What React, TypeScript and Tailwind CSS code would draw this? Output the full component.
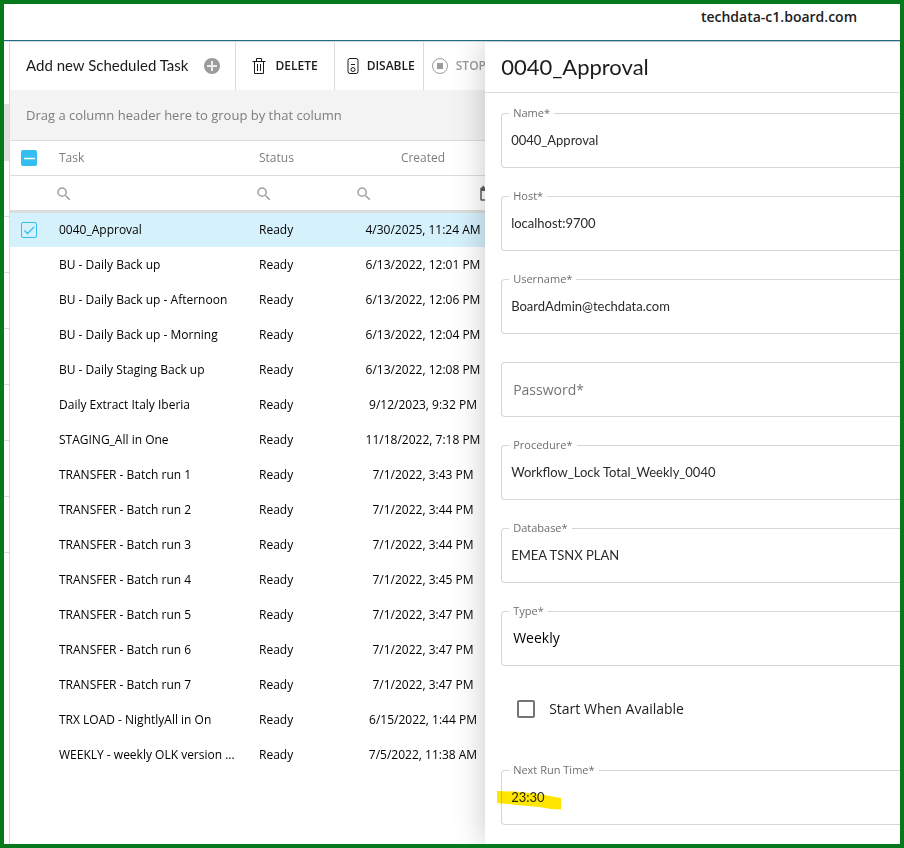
import { useState } from 'react';
import type { ReactNode } from 'react';

const TASKS = [
  { name: '0040_Approval', created: '4/30/2025, 11:24 AM' },
  { name: 'BU - Daily Back up', created: '6/13/2022, 12:01 PM' },
  { name: 'BU - Daily Back up - Afternoon', created: '6/13/2022, 12:06 PM' },
  { name: 'BU - Daily Back up - Morning', created: '6/13/2022, 12:04 PM' },
  { name: 'BU - Daily Staging Back up', created: '6/13/2022, 12:08 PM' },
  { name: 'Daily Extract Italy Iberia', created: '9/12/2023, 9:32 PM' },
  { name: 'STAGING_All in One', created: '11/18/2022, 7:18 PM' },
  { name: 'TRANSFER - Batch run 1', created: '7/1/2022, 3:43 PM' },
  { name: 'TRANSFER - Batch run 2', created: '7/1/2022, 3:44 PM' },
  { name: 'TRANSFER - Batch run 3', created: '7/1/2022, 3:44 PM' },
  { name: 'TRANSFER - Batch run 4', created: '7/1/2022, 3:45 PM' },
  { name: 'TRANSFER - Batch run 5', created: '7/1/2022, 3:47 PM' },
  { name: 'TRANSFER - Batch run 6', created: '7/1/2022, 3:47 PM' },
  { name: 'TRANSFER - Batch run 7', created: '7/1/2022, 3:47 PM' },
  { name: 'TRX LOAD - NightlyAll in On', created: '6/15/2022, 1:44 PM' },
  { name: 'WEEKLY - weekly OLK version ...', created: '7/5/2022, 11:38 AM' },
];

const SearchIcon = () => (
  <svg width="18" height="18" viewBox="0 0 24 24" fill="#a3a3a3" className="shrink-0">
    <path d="M15.5 14h-.79l-.28-.27A6.47 6.47 0 0 0 16 9.5 6.5 6.5 0 1 0 9.5 16c1.61 0 3.09-.59 4.23-1.57l.27.28v.79l5 4.99L20.49 19l-4.99-5zm-6 0C7.01 14 5 11.99 5 9.5S7.01 5 9.5 5 14 7.01 14 9.5 11.99 14 9.5 14z" />
  </svg>
);

const PlusIcon = () => (
  <svg width="16" height="16" viewBox="0 0 16 16">
    <circle cx="8" cy="8" r="8" fill="#9b9b9b" />
    <path d="M8 3v10M3 8h10" stroke="#ececec" strokeWidth="2" />
  </svg>
);

const TrashIcon = () => (
  <svg width="14" height="16" viewBox="0 0 14 16" fill="none" stroke="#1c1c1c">
    <path d="M.5 3.5h13M4.5 3V.5h5V3M2.5 3.5v12h9v-12M5.5 6v7M8.5 6v7" />
  </svg>
);

const DisableIcon = () => (
  <svg width="12" height="16" viewBox="0 0 12 16" fill="none" stroke="#1c1c1c">
    <rect x="1" y=".5" width="10" height="15" rx="2" />
    <path d="M4 6.5h4" />
    <circle cx="6" cy="11.5" r="2" />
  </svg>
);

const StopIcon = () => (
  <svg width="16" height="16" viewBox="0 0 16 16">
    <circle cx="8" cy="8" r="7.5" fill="none" stroke="#9b9b9b" />
    <rect x="5" y="5" width="6" height="6" fill="#9b9b9b" />
  </svg>
);

function Filter({ label }: { label: string }) {
  return (
    <label className="flex items-center gap-1">
      <SearchIcon />
      <input aria-label={label} className="w-full min-w-0 bg-transparent outline-none" />
    </label>
  );
}

function Field({ id, label, children }: { id: string; label: string; children: ReactNode }) {
  return (
    <fieldset className="h-[63px] rounded-l border border-r-0 border-[#d6d6d6] pl-[7px]">
      <legend className="px-1 text-[11px] leading-4 text-[#6e6e6e]">
        <label htmlFor={id}>{label}*</label>
      </legend>
      {children}
    </fieldset>
  );
}

function TextField({ id, label, value }: { id: string; label: string; value: string }) {
  return (
    <Field id={id} label={label}>
      <input
        id={id}
        defaultValue={value}
        className="block h-[38px] w-full pl-0.5 font-['Lato','Open_Sans',sans-serif] text-[13px] text-[#2b2b2b] outline-none"
      />
    </Field>
  );
}

export default function App() {
  const [selected, setSelected] = useState('0040_Approval');

  return (
    <div className="flex min-h-screen flex-col overflow-hidden border-4 border-[#067a1a] bg-white font-['Open_Sans','Noto_Sans',sans-serif] text-[#1c1c1c]">
      <header className="relative z-10 flex h-[37px] shrink-0 justify-end border-b border-[#1d6a88] bg-white pt-px pr-[43px]">
        <span className="text-sm leading-6 font-semibold">techdata-c1.board.com</span>
      </header>

      <div className="flex flex-1 border-t border-[#dcdcdc]">
        {/* Collapsed navigation, only its edge shows */}
        <nav aria-label="Sections" className="flex w-[5px] shrink-0 flex-col pt-[62px]">
          <span className="h-[57px] bg-[#e0e0e0]" />
          {[0, 1, 2, 3, 4, 5, 6].map((i) => (
            <span key={i} className="h-14 border-b border-[#dcdcdc]" />
          ))}
        </nav>

        <main className="min-w-0 flex-1 overflow-hidden border-l border-[#dcdcdc]">
          <div className="flex h-12 w-max divide-x divide-[#dcdcdc] text-xs font-semibold">
            <button className="flex items-center gap-4 px-4 pr-[15px] font-['Lato','Open_Sans',sans-serif] text-[15px] font-normal">
              Add new Scheduled Task
              <PlusIcon />
            </button>
            <button className="flex items-center gap-[9px] px-4">
              <TrashIcon />
              DELETE
            </button>
            <button className="flex items-center gap-2 pr-2 pl-3">
              <DisableIcon />
              DISABLE
            </button>
            <button disabled className="flex items-center gap-2 px-2 text-[#9b9b9b]">
              <StopIcon />
              STOP
            </button>
          </div>

          <div className="flex h-[51px] items-center border-b border-[#dcdcdc] bg-[#f3f3f3] px-4 pt-0.5 text-[13px] text-[#7d7d7d]">
            Drag a column header here to group by that column
          </div>

          <table className="w-[486px] table-fixed text-xs text-black">
            <colgroup>
              <col className="w-10" />
              <col className="w-[200px]" />
              <col className="w-[100px]" />
              <col />
            </colgroup>
            <thead>
              <tr className="h-[34px] border-b border-[#dcdcdc] text-left text-[#7d7d7d]">
                <th className="pl-[11px]">
                  <span className="grid size-4">
                    <input type="checkbox" aria-label="Select all" className="col-start-1 row-start-1 size-4 appearance-none rounded-[2px] bg-[#34bdf0]" />
                    <svg viewBox="0 0 16 16" className="pointer-events-none col-start-1 row-start-1 size-4">
                      <path d="M3 8.5h11" stroke="#fff" strokeWidth="1.5" />
                    </svg>
                  </span>
                </th>
                <th className="pl-[9px] font-normal">Task</th>
                <th className="pl-[9px] font-normal">Status</th>
                <th className="text-center font-normal">Created</th>
              </tr>
              <tr className="h-9 border-b-3 border-[#dcdcdc]">
                <td />
                <td className="pt-0.5 pl-[5px]"><Filter label="Filter by task" /></td>
                <td className="pt-0.5 pl-[5px]"><Filter label="Filter by status" /></td>
                <td className="pt-0.5 pl-[5px]">
                  <span className="flex items-center justify-between">
                    <Filter label="Filter by created" />
                    <svg width="18" height="18" viewBox="0 0 24 24" fill="#5c5c5c" className="shrink-0">
                      <path d="M19 3h-1V1h-2v2H8V1H6v2H5a2 2 0 0 0-2 2v14a2 2 0 0 0 2 2h14a2 2 0 0 0 2-2V5a2 2 0 0 0-2-2zm0 16H5V8h14v11z" />
                    </svg>
                  </span>
                </td>
              </tr>
            </thead>
            <tbody>
              {TASKS.map((task) => {
                const active = task.name === selected;
                return (
                  <tr
                    key={task.name}
                    onClick={() => setSelected(task.name)}
                    className={active ? 'h-9 bg-[#d5f1fc]' : 'h-[35px]'}
                  >
                    <td className="pl-[11px]">
                      {active && (
                        <span className="grid size-4">
                          <input
                            type="checkbox"
                            checked
                            readOnly
                            aria-label={task.name}
                            className="col-start-1 row-start-1 size-4 appearance-none rounded-[2px] border border-[#34bdf0]"
                          />
                          <svg viewBox="0 0 16 16" fill="none" stroke="#34bdf0" className="pointer-events-none col-start-1 row-start-1 size-4">
                            <path d="M3.5 8.5l3 3L13 5" strokeWidth="1.3" />
                          </svg>
                        </span>
                      )}
                    </td>
                    <td className="pl-[9px] whitespace-nowrap">{task.name}</td>
                    <td className="pl-[9px]">Ready</td>
                    <td className="text-center whitespace-nowrap">{task.created}</td>
                  </tr>
                );
              })}
            </tbody>
          </table>
        </main>

        <aside className="relative w-[46.3%] shrink-0 bg-white shadow-[0_0_30px_rgba(0,0,0,0.22)]">
          <h1 className="flex h-[51px] items-center border-b border-[#dcdcdc] pb-0.5 pl-4 font-['Lato','Open_Sans',sans-serif] text-[22px]">
            0040_Approval
          </h1>
          <form className="flex flex-col gap-5 pt-3 pl-4">
            <TextField id="name" label="Name" value="0040_Approval" />
            <TextField id="host" label="Host" value="localhost:9700" />
            <TextField id="username" label="Username" value="BoardAdmin@techdata.com" />
            <div className="mt-2 h-[55px] rounded-l border border-r-0 border-[#d6d6d6] pl-[11px]">
              <input
                type="password"
                aria-label="Password"
                placeholder="Password*"
                className="h-full w-full text-sm outline-none placeholder:text-[#757575]"
              />
            </div>
            <TextField id="procedure" label="Procedure" value="Workflow_Lock Total_Weekly_0040" />
            <TextField id="database" label="Database" value="EMEA TSNX PLAN" />
            <Field id="type" label="Type">
              <select id="type" className="block h-[38px] w-full appearance-none pl-1 text-sm text-black outline-none">
                <option>Weekly</option>
              </select>
            </Field>
            <label className="my-[11px] flex h-6 items-center gap-[14px] pl-4 text-sm">
              <input type="checkbox" className="size-[18px] appearance-none rounded-[2px] border-2 border-[#757575]" />
              Start When Available
            </label>
            <div className="relative mt-[10px]">
              <TextField id="next-run" label="Next Run Time" value="23:30" />
              {/* Yellow marker stroke over the run time */}
              <svg viewBox="0 0 64 20" className="pointer-events-none absolute top-7 -left-1 h-5 w-16 mix-blend-multiply">
                <path d="M0 1l18 .6 24 2.4 22 4v11.5l-10-.5-12-2L20 15 0 13z" fill="#ffe600" />
              </svg>
            </div>
          </form>
        </aside>
      </div>
    </div>
  );
}
